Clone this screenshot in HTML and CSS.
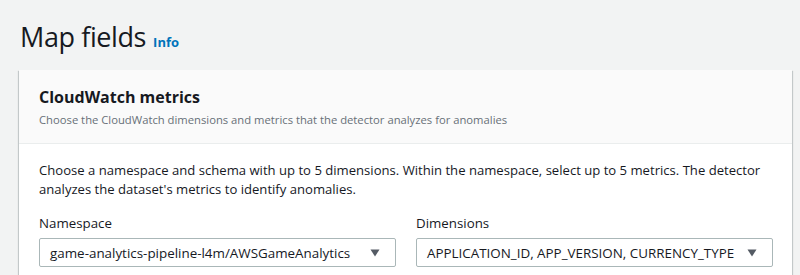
FILE: index.html
```html
<!DOCTYPE html>
<html lang="en">
<head>
    <meta charset="UTF-8">
    <meta name="viewport" content="width=device-width, initial-scale=1.0">
    <title>Map fields</title>
    <link rel="stylesheet" href="styles.css">
</head>
<body>
    <div class="page">
        <h1 class="page-title"><span>Map fields</span><a href="#" class="info-link">Info</a></h1>

        <div class="card">
            <div class="card-header">
                <h2>CloudWatch metrics</h2>
                <p class="card-desc">Choose the CloudWatch dimensions and metrics that the detector analyzes for anomalies</p>
            </div>
            <div class="card-body">
                <p class="intro">Choose a namespace and schema with up to 5 dimensions. Within the namespace, select up to 5 metrics. The detector analyzes the dataset's metrics to identify anomalies.</p>
                <div class="fields">
                    <div class="field">
                        <label>Namespace</label>
                        <div class="select">
                            <span>game-analytics-pipeline-l4m/AWSGameAnalytics</span>
                            <svg class="caret" width="10" height="8" viewBox="0 0 10 8"><path d="M0.5 0.5 L9.5 0.5 L5 7.5 Z" fill="#545b64"/></svg>
                        </div>
                    </div>
                    <div class="field">
                        <label>Dimensions</label>
                        <div class="select">
                            <span>APPLICATION_ID, APP_VERSION, CURRENCY_TYPE</span>
                            <svg class="caret" width="10" height="8" viewBox="0 0 10 8"><path d="M0.5 0.5 L9.5 0.5 L5 7.5 Z" fill="#545b64"/></svg>
                        </div>
                    </div>
                </div>
            </div>
        </div>
    </div>
</body>
</html>
```

FILE: styles.css
```css
body {
    font-family: "Open Sans", Arial, sans-serif;
    background-color: #f2f3f3;
    color: #16191f;
    margin: 0;
    padding: 0;
}

.page {
    padding: 17px 8px 0 19px;
}

.page-title {
    display: flex;
    align-items: baseline;
    gap: 7px;
    height: 40px;
    font-size: 27px;
    letter-spacing: -0.4px;
    font-weight: 400;
    margin: 0 0 13px 1px;
    line-height: 40px;
}

.info-link {
    font-size: 13px;
    letter-spacing: 0;
    font-weight: 700;
    color: #0073bb;
    text-decoration: none;
}

.card {
    background-color: #fff;
    box-shadow: 0 1px 1px 0 rgba(0, 28, 36, 0.3), 1px 1px 1px 0 rgba(0, 28, 36, 0.15), -1px 1px 1px 0 rgba(0, 28, 36, 0.15);
    width: 773px;
}

.card-header {
    padding: 15px 20px 14px 20px;
    border-bottom: 1px solid #eaeded;
    background-color: #fafafa;
}

.card-header h2 {
    font-size: 16px;
    font-weight: 700;
    margin: 0;
    line-height: 24px;
}

.card-desc {
    font-size: 11.25px;
    color: #687078;
    margin: 2px 0 0 0;
    line-height: 18px;
}

.card-body {
    padding: 17px 20px 10px 20px;
}

.intro {
    font-size: 13.1px;
    line-height: 19px;
    margin: 0 0 14px 0;
}

.fields {
    display: grid;
    grid-template-columns: 357px 357px;
    gap: 20px;
}

.field label {
    display: block;
    font-size: 13.3px;
    line-height: 20px;
    margin-bottom: 5px;
}

.select {
    display: flex;
    align-items: center;
    justify-content: space-between;
    height: 27px;
    border: 1px solid #aab7b8;
    border-radius: 2px;
    padding: 0 15px 0 10px;
    font-size: 13.4px;
    white-space: nowrap;
    background-color: #fff;
}
```
